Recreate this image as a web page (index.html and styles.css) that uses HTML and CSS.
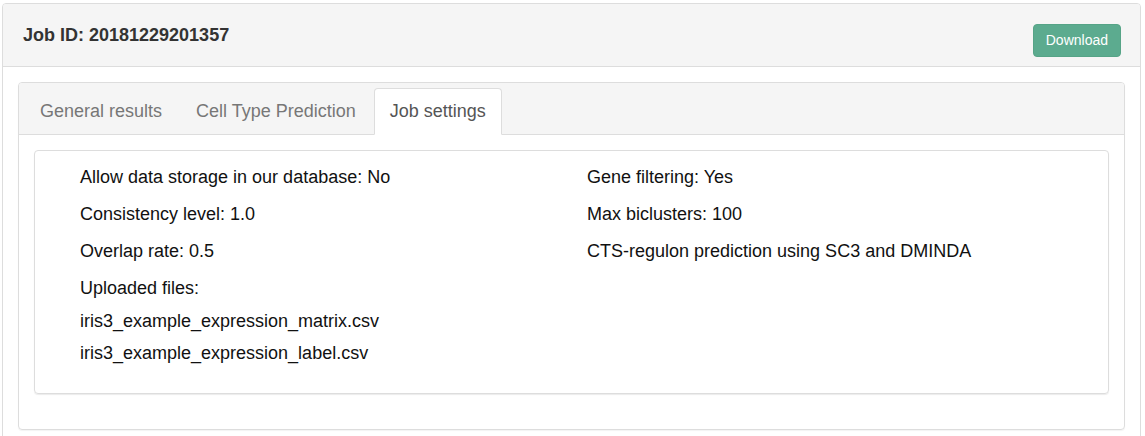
FILE: index.html
```html
<!DOCTYPE html>
<html lang="en">
<head>
<meta charset="utf-8">
<title>Job 20181229201357</title>
<link rel="stylesheet" href="styles.css">
</head>
<body>
<div class="panel">
  <div class="panel-head">
    <h3 class="job-title">Job ID: 20181229201357</h3>
    <button class="btn-download" type="button">Download</button>
  </div>
  <div class="panel-body">
    <div class="tabs-panel">
      <ul class="tabs">
        <li class="tab">General results</li>
        <li class="tab">Cell Type Prediction</li>
        <li class="tab active">Job settings</li>
      </ul>
      <div class="tab-body">
        <div class="settings-box">
          <div class="settings-grid">
            <div class="col">
              <p class="item">Allow data storage in our database: No</p>
              <p class="item">Consistency level: 1.0</p>
              <p class="item">Overlap rate: 0.5</p>
              <p class="item files-label">Uploaded files:</p>
              <p class="file">iris3_example_expression_matrix.csv</p>
              <p class="file">iris3_example_expression_label.csv</p>
            </div>
            <div class="col">
              <p class="item">Gene filtering: Yes</p>
              <p class="item">Max biclusters: 100</p>
              <p class="item">CTS-regulon prediction using SC3 and DMINDA</p>
            </div>
          </div>
        </div>
      </div>
    </div>
  </div>
</div>
</body>
</html>
```

FILE: styles.css
```css
* { box-sizing: border-box; }

html, body {
  margin: 0;
  padding: 0;
  background: #ffffff;
  font-family: "Liberation Sans", Arial, Helvetica, sans-serif;
  color: #111;
}

.panel {
  margin: 3px 4px 0 2px;
  border: 1px solid #dddddd;
  border-radius: 4px;
  background: #ffffff;
}

.panel-head {
  display: flex;
  justify-content: space-between;
  align-items: flex-start;
  padding: 20px 19px 9px 20px;
  background: #f5f5f5;
  border-bottom: 1px solid #dddddd;
  border-radius: 3px 3px 0 0;
}

.job-title {
  margin: 0;
  font-size: 18px;
  line-height: 22px;
  font-weight: bold;
  color: #333333;
}

.btn-download {
  height: 33px;
  padding: 0 12px;
  border: 1px solid #56a487;
  border-radius: 4px;
  background: #5cab8f;
  color: #ffffff;
  font-family: "Liberation Sans", Arial, Helvetica, sans-serif;
  font-size: 14px;
  line-height: 31px;
}

.panel-body {
  padding: 15px;
}

.tabs-panel {
  border: 1px solid #dddddd;
  border-radius: 4px;
  box-shadow: 0 1px 1px rgba(0, 0, 0, 0.05);
}

.tabs {
  display: flex;
  gap: 2px;
  margin: 0;
  padding: 5px 5px 0 5px;
  list-style: none;
  background: #f5f5f5;
  border-bottom: 1px solid #dddddd;
  border-radius: 3px 3px 0 0;
}

.tab {
  margin-bottom: -1px;
  padding: 0 15px;
  height: 47px;
  line-height: 45px;
  font-size: 18px;
  color: #777777;
  border: 1px solid transparent;
  border-radius: 4px 4px 0 0;
}

.tab.active {
  color: #555555;
  background: #ffffff;
  border-color: #dddddd;
  border-bottom-color: #ffffff;
}

.tab-body {
  padding: 15px 15px 35px 15px;
}

.settings-box {
  border: 1px solid #dddddd;
  border-radius: 4px;
  box-shadow: 0 1px 1px rgba(0, 0, 0, 0.08);
  padding: 13px 15px 24px 45px;
}

.settings-grid {
  display: grid;
  grid-template-columns: 507px 1fr;
}

.item {
  margin: 0 0 10px 0;
  font-size: 18px;
  line-height: 27px;
}

.files-label {
  margin-bottom: 3px;
}

.file {
  margin: 0;
  font-size: 18px;
  line-height: 32px;
}
```
